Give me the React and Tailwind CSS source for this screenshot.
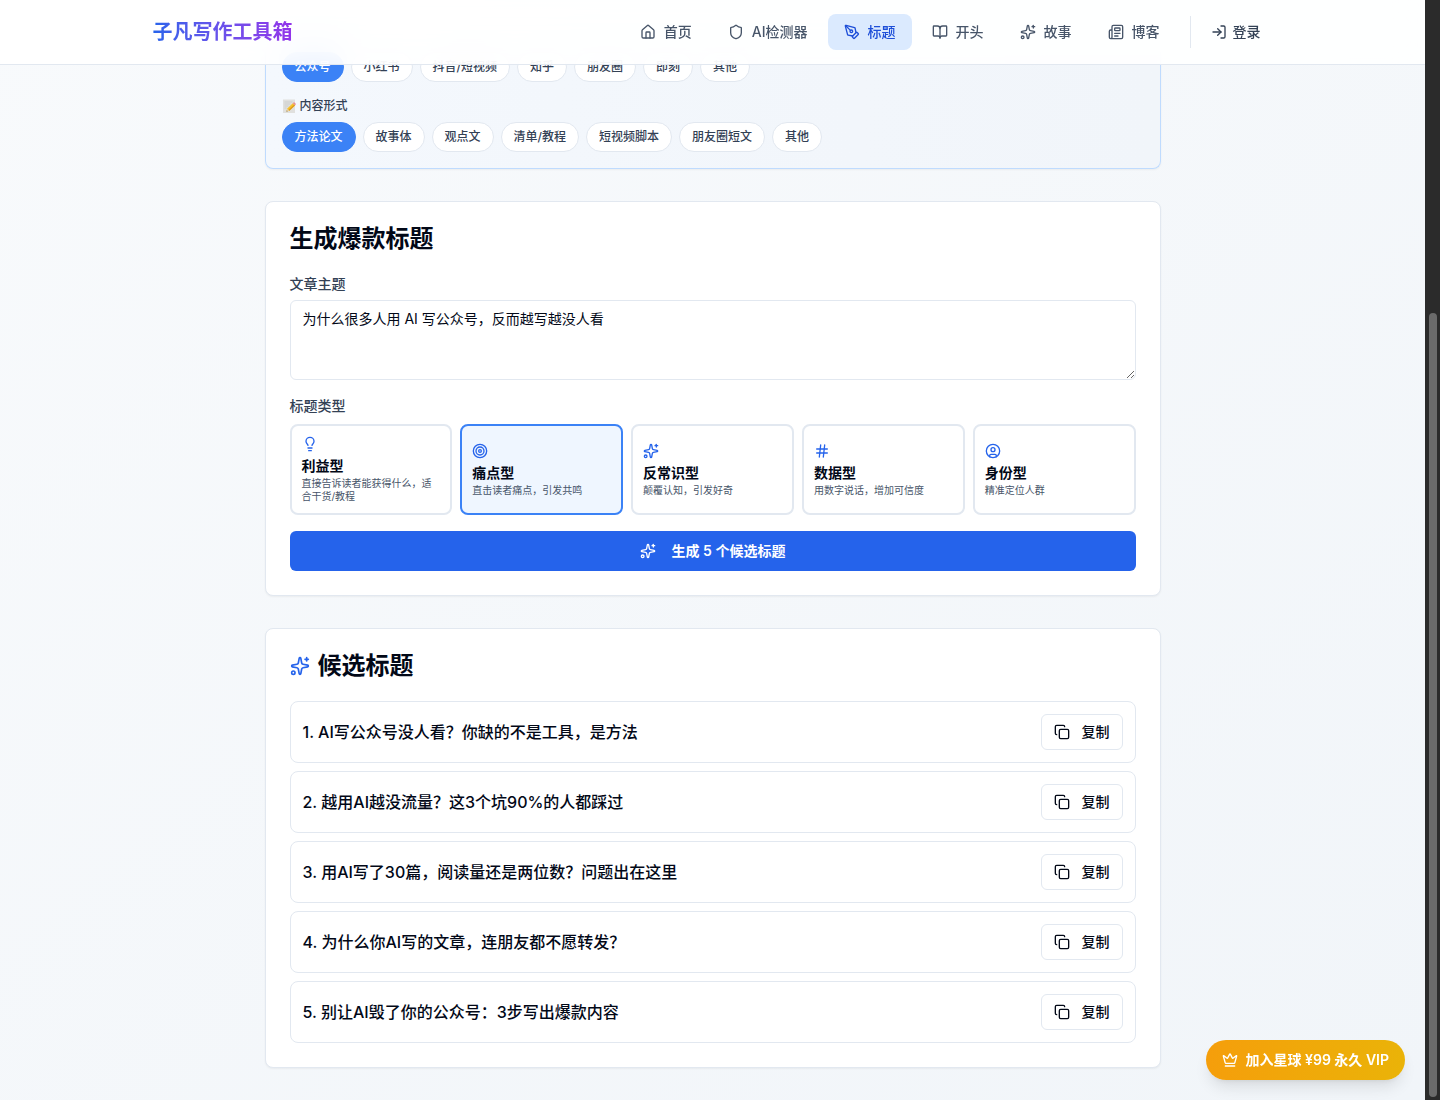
import React, { useState } from 'react';
import {
  BookOpen,
  CircleUser,
  Copy,
  Crown,
  Hash,
  House,
  Lightbulb,
  LogIn,
  Newspaper,
  PenTool,
  Shield,
  Sparkles,
  Target,
} from 'lucide-react';
import clsx from 'clsx';

const NAV_ITEMS = [
  { label: '首页', icon: House },
  { label: 'AI检测器', icon: Shield },
  { label: '标题', icon: PenTool, active: true },
  { label: '开头', icon: BookOpen },
  { label: '故事', icon: Sparkles },
  { label: '博客', icon: Newspaper },
];

const PLATFORMS = ['公众号', '小红书', '抖音/短视频', '知乎', '朋友圈', '即刻', '其他'];
const FORMATS = ['方法论文', '故事体', '观点文', '清单/教程', '短视频脚本', '朋友圈短文', '其他'];

const TITLE_TYPES = [
  { name: '利益型', desc: '直接告诉读者能获得什么，适合干货/教程', icon: Lightbulb },
  { name: '痛点型', desc: '直击读者痛点，引发共鸣', icon: Target },
  { name: '反常识型', desc: '颠覆认知，引发好奇', icon: Sparkles },
  { name: '数据型', desc: '用数字说话，增加可信度', icon: Hash },
  { name: '身份型', desc: '精准定位人群', icon: CircleUser },
];

const CANDIDATES = [
  'AI写公众号没人看？你缺的不是工具，是方法',
  '越用AI越没流量？这3个坑90%的人都踩过',
  '用AI写了30篇，阅读量还是两位数？问题出在这里',
  '为什么你AI写的文章，连朋友都不愿转发？',
  '别让AI毁了你的公众号：3步写出爆款内容',
];

const MemoIcon = () => (
  <svg viewBox="0 0 14 14" className="w-3.5 h-3.5" aria-hidden="true">
    <rect x="1" y="0.5" width="12" height="13.5" fill="#e0e0de" />
    <path d="M2.500 3h8M2.500 5h6M2.500 7h4M2.500 9h2" stroke="#c3c5c8" strokeWidth="0.7" />
    <path d="M4.500 12.600l.8-3 5.500-5.400 2.200 2.200-5.600 5.400z" fill="#f7c22d" />
    <path d="M7.400 11.800l5.600-5.400-.8-.9-6 5.600z" fill="#dd9a1c" />
    <path d="M4.500 12.600l.8-3 2.100 2.200z" fill="#ecd2a0" />
    <path d="M4.500 12.600l.3-1.200.9.900z" fill="#444" />
    <path d="M10.800 4.200l.8-.8c.7-.5 2.500 1.200 2.100 2.200l-.7.8z" fill="#ea8f8f" />
  </svg>
);

const ChipRow = ({ options, value, onChange }) => (
  <div className="flex flex-wrap gap-[7px]">
    {options.map((option) => (
      <button
        key={option}
        type="button"
        onClick={() => onChange(option)}
        className={clsx(
          'h-[30px] px-3 rounded-full border text-xs font-medium',
          option === value
            ? 'bg-[#3b82f6] border-[#3b82f6] text-white'
            : 'bg-white border-[#e2e8f0] text-[#334155]'
        )}
      >
        {option}
      </button>
    ))}
  </div>
);

const Header = () => (
  <header className="sticky top-0 z-10 bg-white/90 backdrop-blur-lg border-b border-[#e2e8f0]">
    <div className="max-w-6xl mx-auto h-16 px-4 flex items-center justify-between">
      <a
        href="#"
        className="text-xl font-bold bg-gradient-to-r from-[#2563eb] to-[#9333ea] bg-clip-text text-transparent"
      >
        子凡写作工具箱
      </a>
      <nav className="flex items-center gap-1">
        {NAV_ITEMS.map(({ label, icon: Icon, active }) => (
          <a
            key={label}
            href="#"
            className={clsx(
              'h-9 px-4 flex items-center gap-2 rounded-lg text-sm font-medium',
              active ? 'bg-[#dbeafe] text-[#1d4ed8]' : 'text-[#475569]'
            )}
          >
            <Icon size={16} />
            {label}
          </a>
        ))}
        <div className="h-8 ml-2.5 pl-2 flex items-center border-l border-[#e2e8f0]">
          <a href="#" className="px-3 flex items-center gap-1.5 text-sm font-medium text-[#334155]">
            <LogIn size={16} />
            登录
          </a>
        </div>
      </nav>
    </div>
  </header>
);

const TypeCard = ({ type, selected, onSelect }) => {
  const Icon = type.icon;
  return (
    <button
      type="button"
      onClick={onSelect}
      className={clsx(
        'flex flex-col items-start justify-center text-left p-2.5 rounded-lg border-2',
        selected ? 'border-[#3b82f6] bg-[#eff6ff]' : 'border-[#e2e8f0] bg-white'
      )}
    >
      <Icon size={16} className="text-[#2563eb] mb-1" />
      <span className="text-sm font-semibold text-[#020817]">{type.name}</span>
      <span className="text-[10px] leading-[13px] mt-px text-[#475569]">{type.desc}</span>
    </button>
  );
};

const App = () => {
  const [platform, setPlatform] = useState('公众号');
  const [format, setFormat] = useState('方法论文');
  const [titleType, setTitleType] = useState('痛点型');
  const [topic, setTopic] = useState('为什么很多人用 AI 写公众号，反而越写越没人看');

  return (
    <div className="flex min-h-screen font-[Inter,'Noto_Sans_CJK_SC',sans-serif] text-[#020817]">
      <div className="flex-1 min-w-0 bg-gradient-to-br from-[#f8fafc] to-[#f1f5f9]">
        <Header />

        <main className="max-w-4xl mx-auto pb-8 flex flex-col gap-8">
          {/* first row of chips scrolls under the header */}
          <section className="-mt-[13px] px-4 pb-4 border border-t-0 border-[#bfdbfe] rounded-b-lg shadow-xs bg-gradient-to-r from-[#f4f8fd] to-[#f1f5fa]">
            <ChipRow options={PLATFORMS} value={platform} onChange={setPlatform} />
            <div className="mt-4 mb-2 flex items-center gap-1 text-xs font-medium text-[#334155]">
              <MemoIcon />
              内容形式
            </div>
            <ChipRow options={FORMATS} value={format} onChange={setFormat} />
          </section>

          <section className="p-6 bg-white border border-[#e2e8f0] rounded-lg shadow-xs">
            <h2 className="text-2xl leading-[26px] font-semibold mb-[22px]">生成爆款标题</h2>
            <label htmlFor="topic" className="block text-sm font-medium text-[#334155] mb-1.5">
              文章主题
            </label>
            <textarea
              id="topic"
              value={topic}
              onChange={(e) => setTopic(e.target.value)}
              className="block w-full h-20 px-3 py-2 text-sm bg-white border border-[#e2e8f0] rounded-md resize-y"
            />
            <p className="mt-4 mb-2 text-sm font-medium text-[#334155]">标题类型</p>
            <div className="grid grid-cols-5 gap-2">
              {TITLE_TYPES.map((type) => (
                <TypeCard
                  key={type.name}
                  type={type}
                  selected={type.name === titleType}
                  onSelect={() => setTitleType(type.name)}
                />
              ))}
            </div>
            <button
              type="button"
              className="mt-4 w-full h-10 flex items-center justify-center gap-4 rounded-md bg-[#2563eb] text-white text-sm font-semibold"
            >
              <Sparkles size={16} />
              生成 5 个候选标题
            </button>
          </section>

          <section className="p-6 bg-white border border-[#e2e8f0] rounded-lg shadow-xs">
            <h2 className="flex items-center gap-2 text-2xl leading-[26px] font-semibold mb-[22px]">
              <Sparkles size={20} className="text-[#2563eb]" />
              候选标题
            </h2>
            <ol className="flex flex-col gap-2">
              {CANDIDATES.map((title, i) => (
                <li
                  key={title}
                  className="p-3 flex items-center justify-between border border-[#e2e8f0] rounded-lg"
                >
                  <span className="font-medium">
                    {i + 1}. {title}
                  </span>
                  <button
                    type="button"
                    className="h-9 px-3 flex items-center gap-3 bg-white border border-[#e2e8f0] rounded-md text-sm font-medium"
                  >
                    <Copy size={16} />
                    复制
                  </button>
                </li>
              ))}
            </ol>
          </section>
        </main>
      </div>

      <a
        href="#"
        className="fixed bottom-5 right-[35px] z-20 h-10 px-4 flex items-center gap-2 rounded-full shadow-lg bg-gradient-to-r from-[#f59e0b] to-[#eab308] text-white text-sm font-semibold"
      >
        <Crown size={16} />
        加入星球 ¥99 永久 VIP
      </a>

      <div className="sticky top-0 h-screen w-[15px] pb-[3px] flex flex-col items-center justify-end bg-[#2b2b2b]">
        <div className="w-2 h-[784px] max-h-[72%] rounded-full bg-[#6b6b6b]" />
      </div>
    </div>
  );
};

export default App;
